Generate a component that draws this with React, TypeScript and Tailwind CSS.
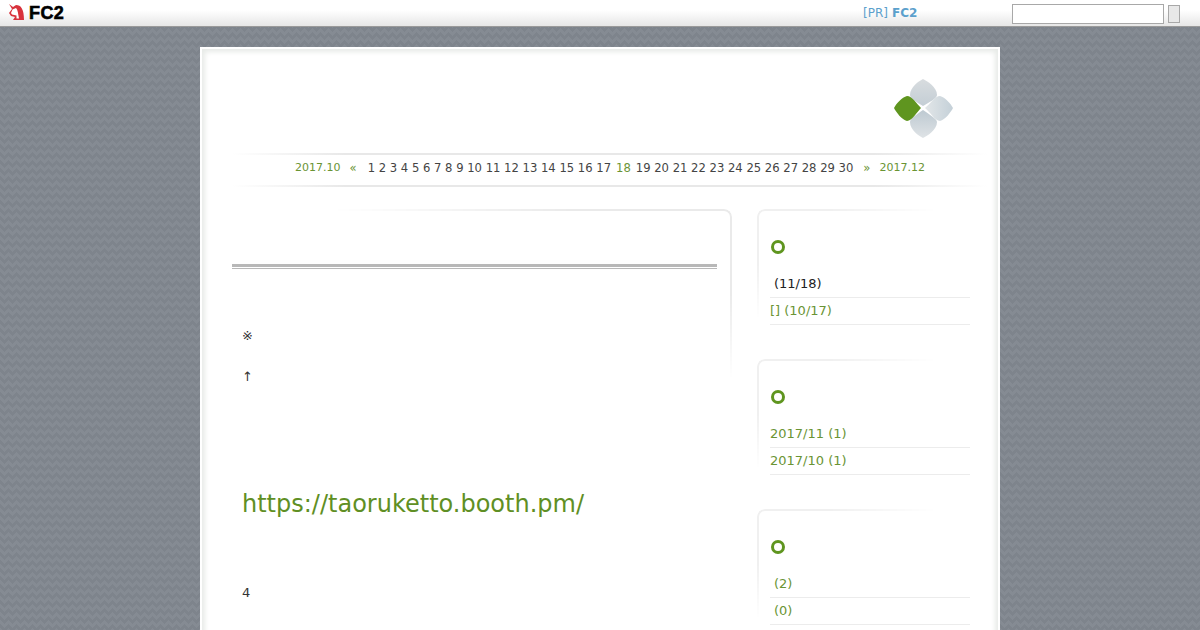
const DAYS_BEFORE = "1 2 3 4 5 6 7 8 9 10 11 12 13 14 15 16 17"
const DAYS_AFTER = "19 20 21 22 23 24 25 26 27 28 29 30"

const FadeLine = ({ className }: { className: string }) => <div className={`h-[2px] ${className}`}></div>

const Logo = () => (
    <svg width="62" height="62" viewBox="0 0 62 62" className="block">
        <defs>
            <linearGradient id="petal" x1="0" y1="0" x2="0" y2="1">
                <stop offset="0" stopColor="#d8dcdf" />
                <stop offset="1" stopColor="#c4ced5" />
            </linearGradient>
            <linearGradient id="petalBottom" x1="0" y1="0" x2="0" y2="1">
                <stop offset="0" stopColor="#bdc9d1" />
                <stop offset="1" stopColor="#dfe3e6" />
            </linearGradient>
            <linearGradient id="petalRight" x1="0" y1="0" x2="1" y2="0">
                <stop offset="0" stopColor="#e2e6e8" />
                <stop offset="1" stopColor="#c4d0d8" />
            </linearGradient>
        </defs>
        <path d="M31 2 C35 4 45 10 45 18 C45 21 38 25 31 29 C24 25 18 21 18 18 C18 10 27 4 31 2Z" fill="url(#petal)" />
        <path d="M31 61 C27 59 18 53 18 45 C18 42 24 38 31 33 C38 38 45 42 45 45 C45 53 35 59 31 61Z" fill="url(#petalBottom)" />
        <path d="M61 31 C59 35 53 43 48 44 C43 44 38 35 33 31 C38 27 43 19 48 19 C53 20 59 27 61 31Z" fill="url(#petalRight)" />
        <path d="M2 31 C4 27 10 20 15 19 C20 19 25 27 29 31 C25 35 20 44 15 44 C10 43 4 35 2 31Z" fill="#5f951f" />
    </svg>
)

const Fc2Mark = () => (
    <svg width="17" height="17" viewBox="0 0 17 17" className="block">
        <path d="M1 0 L5 3 L8 1 C13 1 16 5 16 16 L5 16 L7 13 L3 12 L1 9 L4 5Z" fill="#d8323c" />
        <path d="M4.5 5.5 L8 4 C10 6 10 10 11 14.5 L8.5 14.5 L8.5 11.5 L4 10.5 L3 9Z" fill="#fff" />
    </svg>
)

const TopBar = () => (
    <div className="flex h-[27px] items-center border-b border-[#9a9a9a] bg-[linear-gradient(#ffffff_40%,#e6e6e6)] pt-[2px] pl-2">
        <div className="mt-[-3px] flex w-[855px] items-center gap-[4px]">
            <Fc2Mark />
            <span className="font-['Liberation_Sans',sans-serif] text-[18px] leading-none font-bold tracking-[0.4px] text-black [-webkit-text-stroke:0.6px_black]">
                FC2
            </span>
        </div>
        <div className="mt-[-3px] flex w-[149px] items-baseline gap-[4px] text-[12px] text-[#5ba0cc]">
            <span>[PR]</span>
            <span className="font-bold">FC2</span>
        </div>
        <input className="h-[20px] w-[152px] border border-[#a8a8a8] bg-white" />
        <button className="ml-1 h-[18px] w-[12px] border border-[#a8a8a8] bg-[#e8e8e8]"></button>
    </div>
)

const Calendar = () => (
    <div className="mr-[-20px]">
        <FadeLine className="bg-[linear-gradient(90deg,transparent,#e8e8e8_15%,#e8e8e8_85%,transparent)]" />
        <div className="flex h-[30px] items-center justify-center pb-[3px] text-[11.6px] whitespace-pre text-[#444]">
            <span className="text-[11px] text-[#6a9434]">2017.10</span>
            <span className="mr-[11px] ml-[9px] text-[#6a9434]">«</span>
            <span>{DAYS_BEFORE}</span>
            <span className="mx-[5px] text-[#6a9434]">18</span>
            <span>{DAYS_AFTER}</span>
            <span className="mr-[9px] ml-[10px] text-[#6a9434]">»</span>
            <span className="text-[11px] text-[#6a9434]">2017.12</span>
        </div>
        <FadeLine className="bg-[linear-gradient(90deg,transparent,#e8e8e8_15%,#e8e8e8_85%,transparent)]" />
    </div>
)

const Article = () => (
    <div className="relative h-[500px] w-[500px] shrink-0 text-[13px] text-[#333]">
        <div className="absolute top-0 right-0 h-[170px] w-[400px] rounded-tr-[8px] border-t-2 border-r-2 border-[#eaeaea] [mask-composite:intersect] [mask-image:linear-gradient(90deg,transparent,black_60%),linear-gradient(black_50%,transparent)]"></div>
        <div className="w-[485px] pt-[55px]">
            <div className="h-[5px] border-b border-[#b8b8b8] bg-[linear-gradient(#b8b8b8_3px,#ffffff_3px)]"></div>
        </div>
        <div className="pt-[59px] pl-[10px]">
            <p className="h-[41px] leading-[16px]">※</p>
            <p className="h-[16px] leading-[16px]">↑</p>
            <a className="mt-[103px] block text-[24px] leading-[32px] text-[#5f8f24]">https://taoruketto.booth.pm/</a>
            <p className="mt-[65px] leading-[16px]">4</p>
        </div>
    </div>
)

const SideBlock = ({ rows }: { rows: { text: string; green: boolean; indent: boolean }[] }) => (
    <div className="relative h-[150px] w-[213px] pt-[31px] pl-[14px] text-[13px]">
        <div className="absolute top-0 left-0 h-[110px] w-[180px] rounded-tl-[8px] border-t-2 border-l-2 border-[#f0f0f0] [mask-composite:intersect] [mask-image:linear-gradient(90deg,black_40%,transparent),linear-gradient(black_50%,transparent)]"></div>
        <div className="h-[14px] w-[14px] rounded-full border-[3.5px] border-[#5f951f]"></div>
        <div className="mt-[17px] ml-[-1px] w-[200px]">
            {rows.map((row) => (
                <div
                    key={row.text}
                    className={`flex h-[27px] items-center border-b border-[#ececec] ${row.indent ? "pl-1" : ""} ${row.green ? "text-[#6a9434]" : "text-[#222]"}`}
                >
                    {row.text}
                </div>
            ))}
        </div>
    </div>
)

const App = () => {
    return (
        <div className="h-[630px] overflow-hidden font-['DejaVu_Sans',sans-serif] [background:linear-gradient(135deg,#858b93_25%,transparent_25%)_-4px_0/8px_8px,linear-gradient(225deg,#858b93_25%,transparent_25%)_-4px_0/8px_8px,linear-gradient(315deg,#858b93_25%,transparent_25%)_0_0/8px_8px,linear-gradient(45deg,#858b93_25%,transparent_25%)_0_0/8px_8px,#7e848c]">
            <TopBar />
            <div className="mx-auto mt-5 h-[640px] w-[800px] border-2 border-white bg-white px-[30px] shadow-[inset_0_0_5px_3px_#e8ebe8]">
                <div className="flex h-[104px] justify-end pt-[28px] pr-[14px]">
                    <Logo />
                </div>
                <Calendar />
                <div className="mt-[22px] flex gap-[25px]">
                    <Article />
                    <div>
                        <SideBlock
                            rows={[
                                { text: "(11/18)", green: false, indent: true },
                                { text: "[] (10/17)", green: true, indent: false },
                            ]}
                        />
                        <SideBlock
                            rows={[
                                { text: "2017/11 (1)", green: true, indent: false },
                                { text: "2017/10 (1)", green: true, indent: false },
                            ]}
                        />
                        <SideBlock
                            rows={[
                                { text: "(2)", green: true, indent: true },
                                { text: "(0)", green: true, indent: true },
                            ]}
                        />
                    </div>
                </div>
            </div>
        </div>
    )
}

export default App
